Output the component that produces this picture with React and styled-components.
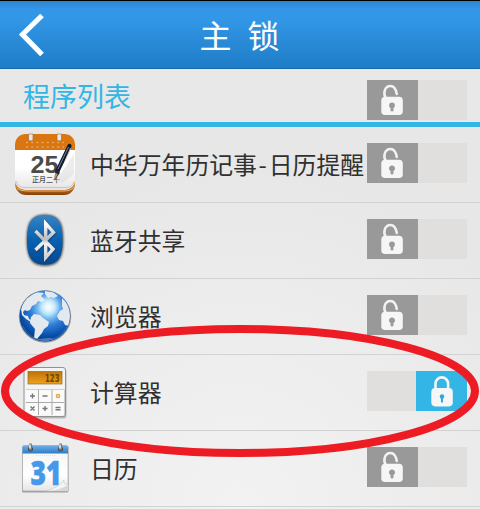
import React from "react";
import styled, { createGlobalStyle } from "styled-components";

const Global = createGlobalStyle`
  * { box-sizing: border-box; }
  body { margin: 0; background: #e8e8e8; overflow: hidden; font-family: "Noto Sans CJK SC", sans-serif; }
`;
const Screen = styled.div`
  position: relative;
  width: 480px;
  height: 509px;
  overflow: hidden;
  background: radial-gradient(circle at 50% 100%, #f2f2f2 0, #eeeeee 150px, #e7e7e7 350px);
`;
const Header = styled.header`
  height: 69px;
  border-top: 1px solid #000;
  border-bottom: 1px solid #1668ab;
  background: linear-gradient(#2f83cb 0, #3397e9 8px, #3297e7 18px, #1f7dc7 66px);
  display: grid;
  grid-template-columns: 64px 1fr 64px;
`;
const Back = styled.svg`
  width: 64px;
  height: 67px;
`;
const Title = styled.h1`
  margin: 0;
  padding-right: 1px;
  color: #fff;
  font-size: 32px;
  font-weight: 400;
  line-height: 67px;
  text-align: center;
  word-spacing: 9px;
  white-space: nowrap;
`;
const Section = styled.div`
  height: 58px;
  padding: 11px 13px 0 23px;
  border-bottom: 5px solid #33b5e5;
  background: #e8e8e8;
  display: flex;
  justify-content: space-between;
`;
const SectionTitle = styled.h2`
  margin: 0;
  color: #33b5e5;
  font-size: 27px;
  font-weight: 400;
  line-height: 32px;
`;
const List = styled.ul`
  margin: 0;
  padding: 0;
  list-style: none;
`;
const Row = styled.li`
  height: 76px;
  padding-right: 13px;
  border-bottom: 1px solid #d2d2d2;
  display: flex;
`;
const AppIcon = styled.svg`
  width: 90px;
  height: 75px;
  flex: none;
`;
const Name = styled.span`
  flex: 1;
  width: 0;
  color: #303030;
  font-size: 23.85px;
  line-height: 74px;
  white-space: nowrap;
`;
const Dash = styled.span`
  padding: 0 2px 0 1.5px;
`;
const Track = styled.div`
  width: 100px;
  height: 40px;
  margin-top: ${(p) => (p.$head ? 0 : 16)}px;
  flex: none;
  background: #e0dfdd;
  display: flex;
  justify-content: ${(p) => (p.$on ? "flex-end" : "flex-start")};
`;
const Thumb = styled.div`
  width: 51px;
  height: 40px;
  background: ${(p) => (p.$on ? "#33b5e5" : "#999999")};
`;
const Mark = styled.svg`
  position: absolute;
  inset: 0;
  width: 480px;
  height: 509px;
  pointer-events: none;
`;

function Switch({ on, head }) {
  return (
    <Track $on={on} $head={head}>
      <Thumb $on={on}>
        <svg width="51" height="40" viewBox="0 0 51 40">
          {on ? (
            <path d="M19.500 19V12.700a6.300 6.300 0 0 1 12.600 0V19" fill="none" stroke="#f6f6f6" strokeWidth="2.600" />
          ) : (
            <path d="M18.800 18C16.200 14.500 17 6 23.500 6c3.700 0 5.500 3.500 6.300 8" fill="none" stroke="#f2f2f2" strokeWidth="2.500" strokeLinecap="round" />
          )}
          <g transform={on ? "translate(1 .3)" : undefined}>
            <rect x="14.300" y="16.800" width="21.500" height="18.300" rx="3.800" fill="#f6f6f6" />
            <circle cx="25" cy="25.300" r={on ? 2.300 : 2.900} fill={on ? "#33a9d8" : "#999"} />
            <path d="M25 26v5.300" stroke={on ? "#33a9d8" : "#999"} strokeWidth={on ? 2 : 2.800} />
          </g>
        </svg>
      </Thumb>
    </Track>
  );
}

const Almanac = () => (
  <AppIcon viewBox="0 0 90 75">
    <defs>
      <linearGradient id="wood" x1="0" y1="0" x2="0" y2="1">
        <stop offset="0.8" stopColor="#e59a4a" />
        <stop offset="1" stopColor="#884004" />
      </linearGradient>
      <linearGradient id="paper" x1="0" y1="0" x2="0" y2="1">
        <stop offset="0.6" stopColor="#fff" />
        <stop offset="1" stopColor="#e4e4e4" />
      </linearGradient>
    </defs>
    <rect x="15" y="8" width="60" height="60" rx="11" fill="url(#wood)" />
    <path d="M17 61q3 3 10 3h36q8 0 11-4" fill="none" stroke="#f5b26b" />
    <rect x="15" y="7" width="60" height="56" rx="10" fill="url(#paper)" />
    <path d="M16 54q2 6.500 9 6.500h40q8 0 9-6" fill="none" stroke="#c8c6c3" />
    <path d="M15 23v-6a10 10 0 0 1 10-10h40a10 10 0 0 1 10 10v6z" fill="#da760f" />
    <path d="M26 15.500h38M26 20h38" stroke="#eaa560" strokeWidth="1.300" strokeDasharray="2 3.200" />
    <path d="M28.500 7h4.500v6q-2.250 2-4.500 0zM57 7h4.500v6q-2.250 2-4.500 0z" fill="#e8e6e0" stroke="#9a6a35" strokeWidth=".6" />
    <text x="30.500" y="46" textLength="28" lengthAdjust="spacingAndGlyphs" fontFamily="Liberation Sans" fontWeight="700" fontSize="24.500" fill="#4b4b4b">25</text>
    <text x="32" y="54.500" fontFamily="Noto Sans CJK SC" fontSize="7" fontWeight="500" fill="#555">正月二十</text>
    <path d="M74 27L56 54l7 2 11-9z" fill="#ddd" opacity=".55" />
    <path d="M69.500 19L57.500 44" stroke="#111b2d" strokeWidth="4.200" strokeLinecap="round" />
    <path d="M68.500 20L58 42" stroke="#6d82a0" strokeWidth="1" />
    <path d="M70.500 21L65 34" stroke="#d7cbb0" strokeWidth=".8" />
    <path d="M59.500 43l-4-1.500-1 12 5-7z" fill="#1b2638" />
    <path d="M55 46l3 1-4 7z" fill="#b8965b" />
  </AppIcon>
);

const Bluetooth = () => (
  <AppIcon viewBox="0 0 90 75">
    <defs>
      <linearGradient id="bt" x1="0" y1="0" x2="0" y2="1">
        <stop offset="0" stopColor="#3683c4" />
        <stop offset=".5" stopColor="#0861b0" />
        <stop offset="1" stopColor="#034994" />
      </linearGradient>
      <linearGradient id="silver" x1="0" y1="0" x2="0" y2="1">
        <stop offset="0" stopColor="#fff" />
        <stop offset=".45" stopColor="#b9bbc0" />
        <stop offset=".6" stopColor="#f2f2f2" />
        <stop offset="1" stopColor="#d0d0d3" />
      </linearGradient>
      <filter id="btShadow" x="-30%" y="-20%" width="160%" height="140%"><feGaussianBlur stdDeviation="1" /></filter>
    </defs>
    <path d="M45 11.500c14 0 18.500 8 18.500 25.500S59 63 45 63s-18.500-8.500-18.500-26S31 11.500 45 11.500z" fill="#222" opacity=".75" filter="url(#btShadow)" />
    <path d="M45 12c13.500 0 17.500 8 17.500 25S58.500 61.500 45 61.500 27 54 27 37s4.500-25 18-25z" fill="url(#bt)" />
    <path d="M35.500 28L53 46 45.700 54.500V20.500L53.500 29.500 35.500 47" fill="none" stroke="#173a63" strokeWidth="4.500" opacity=".5" transform="translate(.6 .8)" />
    <path d="M35.500 28L53 46 45.700 54.500V20.500L53.500 29.500 35.500 47" fill="none" stroke="url(#silver)" strokeWidth="3.400" strokeMiterlimit="10" />
  </AppIcon>
);

const Globe = () => (
  <AppIcon viewBox="0 0 90 75">
    <defs>
      <radialGradient id="ocean" cx=".56" cy=".34" r=".68">
        <stop offset="0" stopColor="#e8fbff" />
        <stop offset=".2" stopColor="#a2dcfb" />
        <stop offset=".5" stopColor="#2f7fda" />
        <stop offset=".8" stopColor="#0a50ab" />
        <stop offset="1" stopColor="#06357c" />
      </radialGradient>
      <radialGradient id="shine">
        <stop offset="0" stopColor="#fff" stopOpacity=".8" />
        <stop offset="1" stopColor="#fff" stopOpacity="0" />
      </radialGradient>
      <clipPath id="disc"><circle cx="45" cy="37" r="25" /></clipPath>
    </defs>
    <circle cx="45" cy="37.500" r="26.200" fill="#666" opacity=".6" />
    <circle cx="45" cy="37" r="25.400" fill="url(#ocean)" />
    <g clipPath="url(#disc)" fill="#e4e9ef">
      <path d="M21 30l2-8 5-5 8-4 8 1-3 3 4 4-3 2-4-1-2 3-4 2-2 4-3 1-2-1-2 2 1 3 4 1 1 3 4 2-2 1-5-3-4-4z" />
      <path d="M31 38l3-3 6 1 3 3 6 4-1 4-4 3-2 4-5 6-3-1 1-9-5-6z" />
      <path d="M45 12l8 1 5 4-4 2-3-1-3 1-3-4z" />
      <path d="M62 19l6 6 3 9-2 13-4-1-2-4-4-1-2-4 3-5 3-2-1-3z" />
      <path d="M30 58l9 2 10-1 7 1-12 3z" opacity=".35" />
    </g>
    <path d="M23 47a24 24 0 0 0 44 0" fill="none" stroke="#2e88dc" strokeWidth="1.200" opacity=".5" />
    <circle cx="49" cy="27" r="11" fill="url(#shine)" />
  </AppIcon>
);

const Calculator = () => (
  <AppIcon viewBox="0 0 90 75">
    <defs>
      <linearGradient id="lcd" x1="0" y1="0" x2="0" y2="1">
        <stop offset="0" stopColor="#bd7207" />
        <stop offset="1" stopColor="#efa31b" />
      </linearGradient>
    </defs>
    <rect x="24" y="14" width="42.500" height="49.500" rx="3" fill="#777" opacity=".45" />
    <rect x="24" y="12.500" width="41.500" height="49" rx="2.500" fill="#f4f4f4" stroke="#919191" />
    <rect x="28" y="16.500" width="34" height="12.500" fill="url(#lcd)" stroke="#8b6c32" strokeWidth=".7" />
    <text x="45" y="27" textLength="14.500" lengthAdjust="spacingAndGlyphs" fontFamily="DejaVu Sans" fontWeight="700" fontSize="10.500" fill="#6b4200">123</text>
    <path d="M26 34.500h38.500V60H26z" fill="#aaa" />
    <path d="M26 35h12v12H26zM39 35h12.500v12H39zM52.500 35H64v12H52.500zM26 48h12v12H26zM39 48h12.500v12H39zM52.500 48H64v12H52.500z" fill="#fafafa" />
    <path d="M30 41h5M32.500 38.500v5M42.500 41h5M42.500 53.500h5M45 51v5M30.500 51.500l4 4M34.500 51.500l-4 4M55.500 52.500h5M55.500 54.700h5" fill="none" stroke="#777" strokeWidth="1.400" />
    <circle cx="58" cy="41" r="1.600" fill="none" stroke="#eba443" strokeWidth="1.500" />
  </AppIcon>
);

const Calendar = () => (
  <AppIcon viewBox="0 0 90 75">
    <defs>
      <linearGradient id="band" x1="0" y1="0" x2="0" y2="1">
        <stop offset="0" stopColor="#6eafe9" />
        <stop offset="1" stopColor="#2c7bc7" />
      </linearGradient>
      <linearGradient id="sheet" x1="0" y1="0" x2="0" y2="1">
        <stop offset="0" stopColor="#f4f4f4" />
        <stop offset=".65" stopColor="#fff" />
        <stop offset="1" stopColor="#e5e5e5" />
      </linearGradient>
    </defs>
    <rect x="22" y="15" width="46.500" height="46.500" rx="1.500" fill="#777" opacity=".65" />
    <rect x="22.500" y="14.500" width="45.500" height="45.500" rx="1.500" fill="url(#sheet)" stroke="#aaa" strokeWidth=".7" />
    <path d="M22.500 22.500v-6q0-2 2-2h41.500q2 0 2 2v6z" fill="url(#band)" />
    <path d="M36 24.500h20" stroke="#e2e2e2" strokeDasharray="1 1" />
    <text x="30.500" y="53.500" textLength="31" lengthAdjust="spacingAndGlyphs" fontFamily="Open Sans" fontWeight="800" fontSize="33.500" fill="#4698e8" stroke="#4698e8" strokeWidth=".6">31</text>
    <path d="M45 60q13-3 19-11-1 5 4 4v7z" fill="#f4f4f4" stroke="#c4c4c4" strokeWidth=".6" />
    <path d="M50 60q10-1 18-6v6z" fill="#d7d7d7" />
    <g fill="#444"><circle cx="30.500" cy="18" r="2.500" /><circle cx="60.500" cy="18" r="2.500" /></g>
    <path d="M30.500 18v-4M60.500 18v-4" stroke="#777" strokeWidth="3.400" strokeLinecap="round" />
    <path d="M30 17v-3M60 17v-3" stroke="#f4f4f4" strokeWidth="1.500" strokeLinecap="round" />
  </AppIcon>
);

const apps = [
  { name: <>中华万年历记事<Dash>-</Dash>日历提醒</>, Icon: Almanac },
  { name: "蓝牙共享", Icon: Bluetooth },
  { name: "浏览器", Icon: Globe },
  { name: "计算器", Icon: Calculator, on: true },
  { name: "日历", Icon: Calendar },
];

export default function App() {
  return (
    <Screen>
      <Global />
      <Header>
        <Back viewBox="0 0 64 67">
          <path d="M42 14.500L22.500 33.500 42 53.500" fill="none" stroke="#fff" strokeWidth="5.200" />
        </Back>
        <Title>主 锁</Title>
      </Header>
      <Section>
        <SectionTitle>程序列表</SectionTitle>
        <Switch head />
      </Section>
      <List>
        {apps.map(({ name, Icon, on }, i) => (
          <Row key={i}>
            <Icon />
            <Name>{name}</Name>
            <Switch on={on} />
          </Row>
        ))}
      </List>
      <Mark viewBox="0 0 480 509">
        <ellipse cx="240" cy="391" rx="235" ry="62" fill="none" stroke="#ed1c24" strokeWidth="8" />
      </Mark>
    </Screen>
  );
}
